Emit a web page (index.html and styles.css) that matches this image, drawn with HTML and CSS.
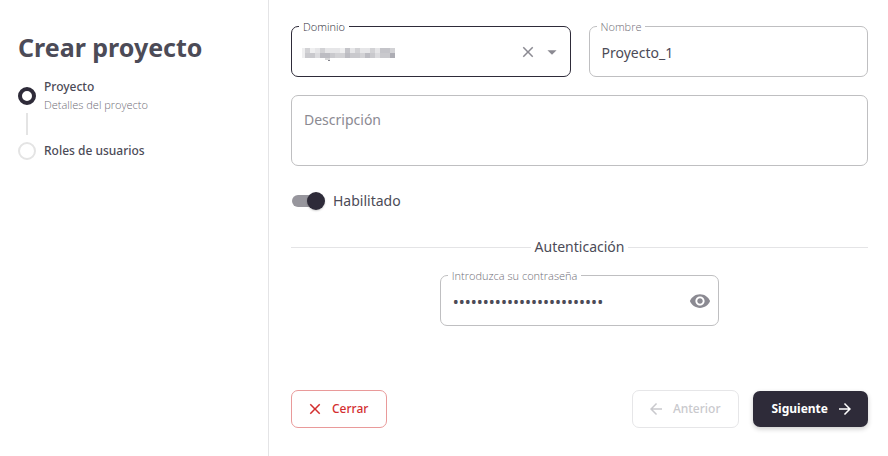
FILE: index.html
```html
<!DOCTYPE html>
<html lang="es">
<head>
<meta charset="utf-8">
<title>Crear proyecto</title>
<link rel="stylesheet" href="styles.css">
</head>
<body>
<div class="wizard">
  <aside class="sidebar">
    <h1 class="title">Crear proyecto</h1>
    <ol class="steps">
      <li class="step">
        <span class="dot dot-active"></span>
        <div class="step-text">
          <span class="step-name">Proyecto</span>
          <span class="step-detail">Detalles del proyecto</span>
        </div>
      </li>
      <li class="step">
        <span class="dot"></span>
        <div class="step-text"><span class="step-name">Roles de usuarios</span></div>
      </li>
    </ol>
  </aside>
  <form class="form">
    <div class="row">
      <div class="field field-focused">
        <label class="field-label" for="domain">Dominio</label>
        <select class="control" id="domain"><option></option></select>
        <svg class="masked" width="93" height="13" viewBox="0 0 93 13" shape-rendering="crispEdges" aria-hidden="true">
          <path fill="#e6e6e8" d="M0 0h93v5H0z"/>
          <path fill="#c9c9cd" d="M3 5h90v5H3z"/>
          <path fill="#efeff0" d="M0 0h3v10H0zM8 0h5v5H8zM38 0h5v5h-5z"/>
          <path fill="#d2d2d5" d="M3 0h5v5H3zM18 0h5v5h-5zM53 0h5v5h-5zM68 0h5v5h-5zM88 0h5v5h-5z"/>
          <path fill="#c4c4c9" d="M43 0h5v5h-5zM78 0h10v5H78z"/>
          <path fill="#dcdcdf" d="M13 5h5v5h-5zM73 5h5v5h-5z"/>
          <path fill="#d2d2d5" d="M33 5h10v5H33zM58 5h5v5h-5z"/>
          <path fill="#bcbcc2" d="M18 5h10v5H18zM43 5h5v5h-5zM63 5h5v5h-5z"/>
          <path fill="#adadb4" d="M88 5h5v5h-5z"/>
          <path fill="#d8d8da" d="M23 10h5v2h-5z"/>
          <path fill="#85858d" d="M26 12h2v1h-2z"/>
        </svg>
        <div class="adornments">
          <button class="icon-button" type="button" aria-label="Borrar"><svg width="18" height="18" viewBox="0 0 24 24"><path d="M19 6.41 17.59 5 12 10.59 6.41 5 5 6.41 10.59 12 5 17.59 6.41 19 12 13.41 17.59 19 19 17.59 13.41 12z"/></svg></button>
          <svg class="caret" width="22" height="22" viewBox="0 0 24 24" aria-hidden="true"><path d="m7 10 5 5 5-5z"/></svg>
        </div>
      </div>
      <div class="field">
        <label class="field-label" for="name">Nombre</label>
        <input class="control" id="name" type="text" value="Proyecto_1">
      </div>
    </div>
    <div class="field">
      <textarea class="control area" id="description" aria-label="Descripción" placeholder="Descripción"></textarea>
    </div>
    <label class="toggle">
      <input class="switch" type="checkbox" role="switch" checked>
      <span>Habilitado</span>
    </label>
    <div class="divider">Autenticación</div>
    <div class="field field-password">
      <label class="field-label" for="password">Introduzca su contraseña</label>
      <input class="control control-password" id="password" type="password" value="contrasena-de-proyecto-01">
      <div class="adornments">
        <button class="icon-button" type="button" aria-label="Mostrar contraseña"><svg width="22" height="22" viewBox="0 0 24 24"><path d="M12 4.5C7 4.500 2.730 7.610 1 12c1.730 4.390 6 7.500 11 7.500s9.270-3.110 11-7.500c-1.730-4.390-6-7.500-11-7.500zM12 17c-2.760 0-5-2.240-5-5s2.240-5 5-5 5 2.240 5 5-2.240 5-5 5zm0-8c-1.660 0-3 1.340-3 3s1.340 3 3 3 3-1.340 3-3-1.340-3-3-3z"/></svg></button>
      </div>
    </div>
    <div class="actions">
      <button class="button button-close" type="button"><svg width="18" height="18" viewBox="0 0 24 24"><path d="M19 6.410 17.590 5 12 10.590 6.410 5 5 6.410 10.590 12 5 17.590 6.410 19 12 13.410 17.590 19 19 17.590 13.410 12z"/></svg>Cerrar</button>
      <button class="button button-back" type="button" disabled><svg width="18" height="18" viewBox="0 0 24 24"><path d="M20 11H7.830l5.590-5.590L12 4l-8 8 8 8 1.410-1.410L7.830 13H20v-2z"/></svg>Anterior</button>
      <button class="button button-next" type="submit">Siguiente<svg width="18" height="18" viewBox="0 0 24 24"><path d="m12 4-1.410 1.410L16.170 11H4v2h12.170l-5.580 5.590L12 20l8-8z"/></svg></button>
    </div>
  </form>
</div>
</body>
</html>
```
FILE: styles.css
```css
* { box-sizing: border-box; }

body {
  margin: 0;
  background: #fff;
  color: #4c4b57;
  font: 14px/20px "Noto Sans", "Open Sans", sans-serif;
}

svg { display: block; fill: currentColor; }

.wizard { display: flex; min-height: 100vh; }

.sidebar {
  flex: 0 0 269px;
  padding: 32px 18px;
  border-right: 1px solid #e4e4e6;
}

.title {
  margin: 0 0 16px;
  font-size: 25px;
  line-height: 30px;
  font-weight: 700;
}

.steps { margin: 0; padding: 0; list-style: none; }

.step { display: flex; align-items: center; gap: 8px; min-height: 18px; }

.step + .step { position: relative; margin-top: 28px; }

.step + .step::before {
  content: "";
  position: absolute;
  left: 8px;
  bottom: 25px;
  width: 2px;
  height: 22px;
  background: #e4e4e4;
}

.dot { width: 18px; height: 18px; border: 2px solid #e4e4e4; border-radius: 50%; }
.dot-active { border: 4px solid #2e2b39; }

.step-text { display: flex; flex-direction: column; }
.step-name { font-size: 12px; line-height: 18px; font-weight: 500; }

.step-detail,
.field-label {
  font-family: "Open Sans", "Noto Sans", sans-serif;
  font-size: 11px;
  line-height: 18px;
  font-weight: 300;
}
.step-detail { color: #6f6e77; }

.form {
  flex: 1;
  display: flex;
  flex-direction: column;
  min-width: 0;
  padding: 26px 20px 28px 22px;
}

.row { display: grid; grid-template-columns: 1fr 1fr; gap: 18px; margin-bottom: 18px; }

.field { position: relative; display: flex; color: #8b8a92; }

.field-label {
  position: absolute;
  left: 8px;
  top: -8px;
  padding: 0 4px;
  background: #fff;
  color: #6f6e77;
}

.control {
  width: 100%;
  height: 51px;
  padding: 2px 12px 0;
  border: 1px solid #bfbfc1;
  border-radius: 7px;
  background: transparent;
  color: #4c4b57;
  font: inherit;
  appearance: none;
  outline: none;
}

.control-password { font-size: 16px; }

.area { display: block; height: 71px; padding-top: 14px; resize: none; }
.area::placeholder { color: #8b8a92; opacity: 1; }

.field-focused .control { border-color: #2e2b39; }
.field-focused .field-label { color: #2e2b39; }

.masked { position: absolute; left: 11px; top: 22px; }

.adornments {
  position: absolute;
  right: 8px;
  top: 0;
  bottom: 0;
  display: flex;
  align-items: center;
  gap: 4px;
}

.icon-button { padding: 0; border: 0; background: none; color: inherit; }

.toggle { display: flex; align-items: center; align-self: flex-start; gap: 8px; margin-top: 25px; }

.switch {
  position: relative;
  width: 34px;
  height: 18px;
  margin: 0;
  appearance: none;
}
.switch::before {
  content: "";
  position: absolute;
  inset: 3px 1px;
  border-radius: 6px;
  background: #97969d;
}
.switch::after {
  content: "";
  position: absolute;
  right: 0;
  top: 0;
  width: 18px;
  height: 18px;
  border-radius: 50%;
  background: #2e2b39;
  box-shadow: 0 1px 2px #0003;
}

.divider { display: flex; align-items: center; gap: 4px; margin-top: 26px; }
.divider::before,
.divider::after { content: ""; flex: 1; height: 1px; background: #e4e4e6; }

.field-password { align-self: center; width: calc(50% - 9px); margin-top: 18px; }

.actions { display: flex; align-items: center; gap: 14px; margin-top: auto; }

.button {
  display: flex;
  align-items: center;
  gap: 8px;
  height: 38px;
  padding: 0 18px 0 14px;
  border: 1px solid;
  border-radius: 7px;
  background: #fff;
  font: 500 12px/18px "Noto Sans", "Open Sans", sans-serif;
}
.button-close { margin-right: auto; border-color: #e99a9a; color: #d32f2f; }
.button-back { border-color: #e6e6e8; color: #c9c9cd; }
.button-next {
  height: 36px;
  padding: 0 14px 0 18px;
  border: 0;
  background: #2e2b39;
  color: #fff;
  font-weight: 700;
  box-shadow: 0 2px 5px #0003;
}
```
